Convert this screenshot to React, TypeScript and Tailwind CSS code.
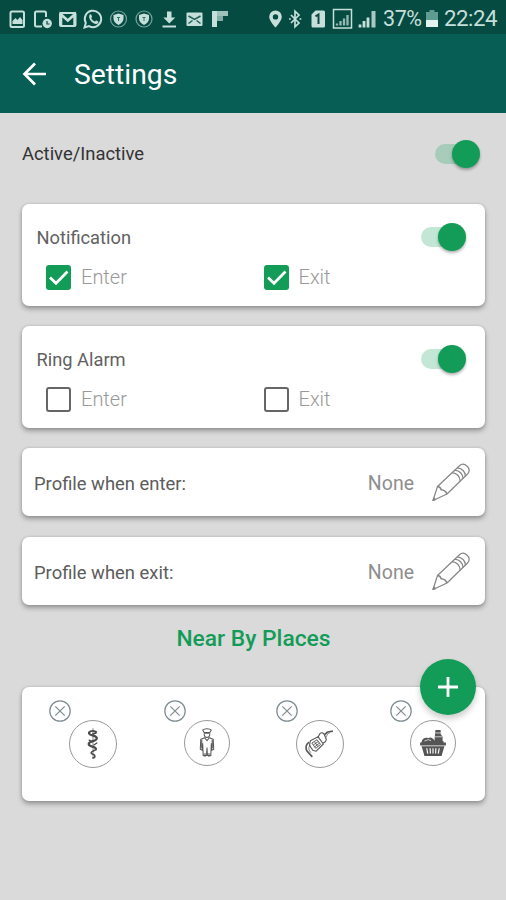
import { useState, type ReactNode } from "react";
import clsx from "clsx";

const STATUS = "#c5dfda";

const StatusLeft = () => (
  <svg width="224" height="24" viewBox="6 6 224 24" fill="none" stroke={STATUS} strokeWidth="2">
    {/* picture */}
    <rect x="10.5" y="10.5" width="13.5" height="15.5" rx="1.5" />
    <path d="M12.5 23v-3l3-3 2 2 2.500-3 2.500 3v4z" fill={STATUS} stroke="none" />
    {/* phone with clock */}
    <path d="M42 25.500h-5.500a1.500 1.500 0 0 1-1.500-1.500V12a1.500 1.500 0 0 1 1.500-1.500h8A1.500 1.500 0 0 1 46 12v4" />
    <circle cx="47.200" cy="22.500" r="4.700" fill={STATUS} stroke="none" />
    <path d="M47 20v3h2.500" stroke="#054b41" strokeWidth="1.200" />
    {/* gmail */}
    <rect x="60" y="12" width="15.500" height="13" rx="1" />
    <path d="M61 25V13.500l6.800 6 6.800-6V25" strokeWidth="2.600" />
    {/* whatsapp */}
    <path d="M84.500 26.500l1.300-4.600a8.200 8.200 0 1 1 3.200 3.200z" />
    <path
      d="M89.600 13.800c.7-.7 1.400-.6 1.800.2l.6 1.500c.2.700-.9 1.300-.7 1.800.8 1.500 1.800 2.500 3.300 3.200.7.200 1.100-1.200 1.800-.9l1.700.9c.7.500.3 1.600-.4 2.100-3.500 2.300-10.400-4.600-8.100-8.800z"
      fill={STATUS}
      stroke="none"
    />
    {/* shields */}
    {[118.500, 144].map((x) => (
      <g key={x} transform={`translate(${x} 18)`}>
        <circle r="8" strokeWidth="1.200" strokeOpacity=".6" />
        <path d="M0-5.500l5 1.500v3.500C5 2.500 3 4.500 0 6-3 4.500-5 2.500-5-.5V-4z" fill={STATUS} stroke="none" />
        <path d="M-1.500-1.500h3M0-1v3" stroke="#2d7166" strokeWidth="1" />
      </g>
    ))}
    {/* download */}
    <path d="M167 10.500h4.500v6h3.800l-6 6-6-6h3.700z" fill={STATUS} stroke="none" />
    <path d="M162.500 25.500h13.500" />
    {/* mail */}
    <rect x="186.500" y="11.500" width="16" height="13.500" rx="1" fill={STATUS} stroke="none" />
    <path d="M188.500 15l6 3.500 6-3.500M188.500 22.500l4-3M200.500 22.500l-4-3" stroke="#215e54" strokeWidth="1.500" />
    {/* flipboard */}
    <path d="M212 10h5v16h-5z" fill={STATUS} stroke="none" />
    <path d="M217 10h11v5h-11z" fill={STATUS} fillOpacity=".8" stroke="none" />
    <path d="M217 15h6v5h-6z" fill={STATUS} fillOpacity=".65" stroke="none" />
  </svg>
);

const StatusRight = () => (
  <svg width="112" height="24" viewBox="266 6 112 24" fill="none" stroke={STATUS} strokeWidth="2">
    {/* location */}
    <path
      fillRule="evenodd"
      d="M275.500 9.500a6.300 6.300 0 0 0-6.300 6.300c0 4.500 6.300 10.700 6.300 10.700s6.300-6.200 6.300-10.700a6.300 6.300 0 0 0-6.300-6.300zm0 3.700a2.700 2.700 0 1 1 0 5.400 2.700 2.700 0 0 1 0-5.400z"
      fill={STATUS}
      stroke="none"
    />
    {/* bluetooth */}
    <path d="M291 14l8 8-4 3.700V10.300l4 3.700-8 8" strokeWidth="1.700" />
    <path d="M289 18h1.800M299.500 18h1.800" strokeWidth="1.700" />
    {/* sim card */}
    <path d="M315.500 9.500h8a1.500 1.500 0 0 1 1.500 1.500v14a1.500 1.500 0 0 1-1.500 1.500h-10.500a1.500 1.500 0 0 1-1.500-1.500V13.500z" fill={STATUS} stroke="none" />
    <path d="M315.500 15.300l3-1.800v9.500" stroke="#12463f" />
    {/* boxed signal */}
    <rect x="333.500" y="8.500" width="18" height="18.500" strokeWidth="1.500" />
    <path d="M337 24.500v-2M340.500 24.500v-4.500M344 24.500v-7M347.500 24.500V14" strokeWidth="2.300" strokeOpacity=".75" />
    {/* signal */}
    <path d="M360 26.500v-3M364 26.500v-6.500M368 26.500v-10" strokeWidth="2.800" />
    <path d="M373.500 26.500V10" strokeWidth="4" strokeOpacity=".85" />
  </svg>
);

const Battery = () => (
  <svg width="12" height="18" viewBox="0 0 12 18" className="shrink-0">
    <path d="M3.500 0h5v2H12v8H0V2h3.500z" fill="#5f9c91" />
    <path d="M0 10h12v7H0z" fill="#e4f3ef" />
  </svg>
);

const Pencil = () => (
  <svg width="40" height="40" viewBox="0 0 40 40" fill="none" stroke="#858585" strokeWidth="1.200" strokeLinejoin="round">
    <path d="M2 38.500l4.500-14L28.500 3.800c4.500-4.300 12.300 2.200 8.500 7.700L16 32z" />
    <path d="M6.500 24.500c2 .2 3.200 1.200 3.600 3.200 2.500.2 4.800 1.300 5.900 4.300" strokeWidth="1.600" />
    <path d="M21 10.700c4.500.6 7.800 3.800 8.300 8.500M23.800 8.200c4.500.6 7.800 3.800 8.300 8.500M26.300 5.900c4.500.6 7.800 3.800 8.300 8.500" />
    <path d="M2 38.500l.8-2.600 1.700 1.700z" fill="#858585" />
  </svg>
);

const Doctor = () => (
  <svg width="48" height="48" viewBox="0 0 48 48" fill="none" stroke="#4b4b4b" strokeLinecap="round">
    <path d="M24 8v31" strokeWidth="1.200" stroke="#9b9b9b" />
    <path d="M20 12c1.500-2.500 5-2 7.500-.5M27 12.500l-3 1" strokeWidth="1.800" />
    <path d="M20 12c-1.500 3.500 8 2.500 8 6s-8.500 2.500-8.500 6 8 2 7.500 5.500" strokeWidth="2.300" />
    <path d="M27 29.500c-.5 1.500-4.500 1.500-5 3.500s4 1.500 4 3.500-1.500 2-2 2" strokeWidth="1.600" />
    <path d="M20 20l3 1.500M25 25l3-2" strokeWidth="1.400" />
  </svg>
);

const Police = () => (
  <svg width="46" height="46" viewBox="0 0 46 46" fill="none" stroke="#585858" strokeWidth="1.100" strokeLinejoin="round">
    <path d="M18.500 9.500c1.500-2 7.500-2 9 0l-1.500 2.500h-6z" />
    <path d="M20 12.300h6" strokeWidth="1.800" />
    <path d="M20 13c0 5.500 6 5.500 6 0M20.500 17.500l-4 1.500-.5 10.500 2 1 .5-7 .5 12.500h3.500l.5-8 .5 8H27l.5-12.500.5 7 2-1-.5-10.500-4-1.500-2.500 3z" />
    <path d="M17.500 19.500v9M28.500 19.500v9M19.500 34.500h2.500M24 34.500h2.500M19.500 36.500h2.500M24 36.500h2.500" strokeWidth="1.200" />
  </svg>
);

const Fuel = () => (
  <svg width="48" height="48" viewBox="0 0 48 48" fill="none" stroke="#5c5c5c" strokeWidth="1.200" strokeLinejoin="round">
    <path d="M22 17l2-4c2-1.500 3.500-.5 4.500 1l2 5c0 2-1.500 3.500-3.500 4" />
    <path d="M14 20.500l8-4 5.500 7.500-7.500 7.500-3.500-1-3.500-5z" />
    <path d="M15.500 23l5.500-3.500 3.500 5-5 4zM17 25l5-3.500M18.500 27l5-4M18.500 22l3 4.500" strokeWidth="1" />
    <path d="M28.500 14.500l3.500-3 5.500-1" strokeWidth="1.800" />
    <path d="M30 17.500l2-4 2.500-1.500" strokeWidth=".7" />
    <path d="M12.500 22c-3.500 3-4 6-2 9.500l5.500 6" strokeWidth="1.800" />
    <path d="M14 25c-2.500 3-2 5 .5 8" strokeWidth=".8" />
  </svg>
);

const Basket = () => (
  <svg width="46" height="46" viewBox="0 0 46 46" fill="#555">
    <path d="M25.500 9.500h5.500v4l2 3v5h-8.500z" />
    <path d="M24.500 12.500h7.500M25 16.500h7.500" stroke="#ddd" strokeWidth=".9" />
    <path d="M11 22c1-4 4-5 7-4 2-1.500 5-.5 7 3h9v2H11z" />
    <path d="M14 21l4-1.500 3 1" stroke="#ddd" strokeWidth=".9" fill="none" />
    <path d="M9.500 22.500h27v3h-27zM11 26.500h24l-1.500 4.500h-21zM12.500 31h21l-1.500 5.500H14z" />
    <path d="M16.500 28.500l1 5.500M20 28.500l.3 5.500M23 28.500V34M26 28.500l-.3 5.500M29.500 28.500l-1 5.500" stroke="#f3f3f3" strokeWidth="1.300" />
  </svg>
);

interface SwitchProps {
  on: boolean;
  onToggle: () => void;
}

const Switch = ({ on, onToggle }: SwitchProps) => (
  <button
    role="switch"
    aria-checked={on}
    onClick={onToggle}
    className={clsx(
      "flex h-5 w-[45.5px] items-center rounded-full transition-colors",
      on ? "justify-end bg-linear-to-r from-[#0f9d58]/25 from-65% to-transparent to-65%" : "justify-start bg-gray-400/40"
    )}
  >
    <span
      className={clsx(
        "size-7 shrink-0 rounded-full shadow-[0_2px_3px_rgba(0,0,0,0.3)]",
        on ? "bg-[#129c58]" : "bg-gray-50"
      )}
    />
  </button>
);

interface CheckProps {
  label: string;
  checked: boolean;
  onChange: () => void;
}

const Check = ({ label, checked, onChange }: CheckProps) => (
  <button onClick={onChange} className="flex w-[217.500px] shrink-0 items-center gap-2.5">
    <span
      className={clsx(
        "flex size-[25px] items-center justify-center rounded-[3px]",
        checked ? "bg-[#129c58]" : "border-[2.500px] border-[#666]"
      )}
    >
      {checked && (
        <svg width="25" height="25" viewBox="0 0 25 25" fill="none" stroke="#fff" strokeWidth="2.700">
          <path d="M4 12.500l6 5.800L21.500 6.500" />
        </svg>
      )}
    </span>
    <span className="text-[20px] leading-6 font-light text-[#999]">{label}</span>
  </button>
);

const Card = ({ className, children }: { className?: string; children: ReactNode }) => (
  <div className={clsx("rounded-[7px] bg-white shadow-[0_3px_5px_rgba(0,0,0,0.3),0_0_3px_rgba(0,0,0,0.15)]", className)}>
    {children}
  </div>
);

const AlertCard = ({ title, active }: { title: string; active: boolean }) => {
  const [on, setOn] = useState(true);
  const [enter, setEnter] = useState(active);
  const [exit, setExit] = useState(active);

  return (
    <Card className="h-[102px] pt-[19px] pr-[19px] pl-6">
      <div className="-ml-[9.5px] flex h-7 items-center justify-between">
        <h2 className="pt-0.5 text-[18.300px] text-[#616161]">{title}</h2>
        <Switch on={on} onToggle={() => setOn(!on)} />
      </div>
      <div className="mt-[13.500px] flex">
        <Check label="Enter" checked={enter} onChange={() => setEnter(!enter)} />
        <Check label="Exit" checked={exit} onChange={() => setExit(!exit)} />
      </div>
    </Card>
  );
};

const ProfileCard = ({ label }: { label: string }) => (
  <Card className="flex h-[68px] items-center pr-[14px] pl-3">
    <span className="grow pt-1 text-[18.400px] text-[#5c5c5c]">{label}</span>
    <span className="mr-[17px] pt-1 text-[19.500px] text-[#8e8e8e]">None</span>
    <Pencil />
  </Card>
);

const places = [
  { name: "Doctor", icon: <Doctor />, box: "size-12 mr-[46.5px]" },
  { name: "Police", icon: <Police />, box: "size-[46px] mr-[46px]" },
  { name: "Fuel", icon: <Fuel />, box: "size-12 mr-[45.5px]" },
  { name: "Market", icon: <Basket />, box: "size-[46px]" },
];

const App = () => {
  const [active, setActive] = useState(true);

  return (
    <div className="flex h-[900px] w-[506px] flex-col overflow-hidden bg-[#dadada] font-[Roboto,sans-serif]">
      <div className="flex h-[34px] shrink-0 items-center bg-[#054b41] pt-[3px] pl-1.5 text-[22px] text-[#c5dfda]">
        <StatusLeft />
        <div className="ml-9">
          <StatusRight />
        </div>
        <span className="ml-[5px] w-[43px] pt-0.5 text-[21.500px] tracking-[-0.4px] whitespace-nowrap">37%</span>
        <Battery />
        <span className="ml-[6px] text-[22.300px] tracking-[-0.5px]">22:24</span>
      </div>

      <header className="flex h-[79px] shrink-0 items-center bg-[#075e54] pl-[22px]">
        <svg width="25" height="24" viewBox="0 0 25 24" fill="none" stroke="#fff" strokeWidth="2.700">
          <path d="M24 12H3M13 1.500L2.500 12 13 22.500" />
        </svg>
        <h1 className="ml-[27px] pt-[3px] text-[28.300px] text-white">Settings</h1>
      </header>

      <main className="px-[22px]">
        <div className="flex h-[91px] items-center justify-between pr-[4px] pb-[9px]">
          <span className="text-[18.400px] text-[#333]">Active/Inactive</span>
          <Switch on={active} onToggle={() => setActive(!active)} />
        </div>

        <div className="mr-[-1px] flex flex-col">
          <AlertCard title="Notification" active />
          <div className="mt-5">
            <AlertCard title="Ring Alarm" active={false} />
          </div>
          <div className="mt-5">
            <ProfileCard label="Profile when enter:" />
          </div>
          <div className="mt-[21px]">
            <ProfileCard label="Profile when exit:" />
          </div>

          <h2 className="mt-[18px] h-8 text-center text-[22.800px] leading-8 font-medium text-[#129c58]">
            Near By Places
          </h2>

          <div className="relative mt-8">
            <Card className="flex h-[114px] pt-[12.500px] pl-[27px]">
              {places.map((place) => (
                <div key={place.name} className="flex items-start">
                  <svg width="22" height="22" viewBox="0 0 22 22" fill="none" stroke="#7e8b90" strokeWidth="1.200" className="shrink-0">
                    <circle cx="11" cy="11" r="10.200" />
                    <path d="M6.300 6.300l9.400 9.400M15.700 6.300l-9.400 9.400" />
                  </svg>
                  <div
                    className={clsx(
                      "mt-[20.500px] -ml-[1.800px] flex shrink-0 items-center justify-center overflow-hidden rounded-full border border-[#999]",
                      place.box
                    )}
                  >
                    {place.icon}
                  </div>
                </div>
              ))}
            </Card>
            <button
              aria-label="Add place"
              className="absolute -top-7 right-[9.500px] flex size-14 items-center justify-center rounded-full bg-[#129c58] shadow-[0_4px_6px_rgba(0,0,0,0.2)]"
            >
              <svg width="22" height="22" viewBox="0 0 22 22" stroke="#fff" strokeWidth="2.800">
                <path d="M1 11h20M11 1v20" />
              </svg>
            </button>
          </div>
        </div>
      </main>
    </div>
  );
};

export default App;
